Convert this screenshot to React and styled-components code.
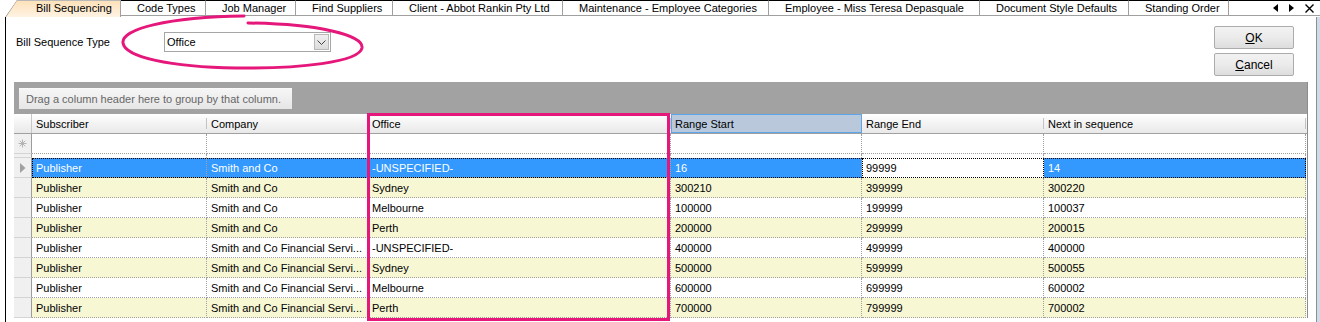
import React from 'react';
import styled, { createGlobalStyle, css } from 'styled-components';

// Global page reset
const GlobalStyle = createGlobalStyle`
  html, body {
    margin: 0;
    padding: 0;
    background: #fff;
  }
  body {
    font-family: "Liberation Sans", Arial, sans-serif;
    font-size: 11px;
    color: #000;
  }
`;

const PINK = '#e5177b';

const Screen = styled.div`
  position: relative;
  width: 1320px;
  height: 322px;
  overflow: hidden;
  background: #fff;
`;

/* ---------- tab strip ---------- */
const TabStrip = styled.div`
  display: flex;
  align-items: flex-start;
  height: 17px;
  padding-left: 5px;
`;

const Tab = styled.div`
  position: relative;
  box-sizing: border-box;
  flex: none;
  width: ${p => p.$w}px;
  height: ${p => (p.$active ? 17 : 16)}px;
  padding-left: ${p => (p.$active ? 31 : 16)}px;
  line-height: 15px;
  white-space: nowrap;
  border-top: 1px solid ${p => (p.$active ? '#b8b8b8' : '#000')};
  border-right: 1px solid #a0a0a0;
  border-bottom: ${p => (p.$active ? 'none' : '1px solid #a0a0a0')};
  background: ${p => (p.$active ? 'linear-gradient(#fde1bb, #fff3e3)' : '#fff')};

  ${p => p.$active && css`
    clip-path: polygon(12px 0, 100% 0, 100% 100%, 0 100%);
    &::before {
      content: '';
      position: absolute;
      left: 0;
      top: -1px;
      width: 12px;
      height: 18px;
      background: linear-gradient(to bottom right, transparent calc(50% - 0.8px), #9a9a9a 50%, transparent calc(50% + 0.8px));
    }
  `}
`;

const TabNav = styled.div`
  flex: 1;
  box-sizing: border-box;
  height: 16px;
  border-top: 1px solid #000;
  border-bottom: 1px solid #a0a0a0;
  display: flex;
  align-items: center;
  justify-content: flex-end;
  padding-right: 6px;
  gap: 11px;
`;

/* ---------- main panel ---------- */
const Panel = styled.div`
  box-sizing: border-box;
  margin-left: 5px;
  width: 1312px;
  height: 305px;
  border-left: 1px solid #000;
  border-right: 1px solid #8e8f8f;
  box-shadow: 3px 0 0 #cddbeb;
`;

const TopArea = styled.div`
  display: flex;
  height: 65px;
`;

const FormRow = styled.div`
  display: flex;
  align-items: center;
  height: 20px;
  margin: 15px 0 0 10px;
`;

const FieldLabel = styled.div`
  width: 148px;
`;

const Combo = styled.div`
  box-sizing: border-box;
  display: flex;
  width: 167px;
  height: 20px;
  border: 1px solid #a6a6a6;
  background: #fff;
`;

const ComboText = styled.div`
  flex: 1;
  padding-left: 2px;
  line-height: 19px;
`;

const DropButton = styled.div`
  box-sizing: border-box;
  width: 15px;
  margin: 1px;
  border: 1px solid #b9b9b9;
  background: linear-gradient(#f0f0f0, #dcdcdc);
  display: flex;
  align-items: center;
  justify-content: center;
`;

const ButtonColumn = styled.div`
  display: flex;
  flex-direction: column;
  gap: 4px;
  margin: 9px 22px 0 auto;
`;

const Button = styled.div`
  box-sizing: border-box;
  width: 80px;
  height: 23px;
  border: 1px solid #acacac;
  border-radius: 2px;
  background: linear-gradient(#f2f2f2, #ebebeb 50%, #dddddd);
  display: flex;
  align-items: center;
  justify-content: center;
  font-size: 12px;

  u {
    text-decoration: underline;
  }
`;

/* ---------- grid ---------- */
const Grid = styled.div`
  position: relative;
  width: 1293px;
  margin-left: 8px;
  border-right: 1px solid #8c8c8c;
  background: #fff;
`;

const GroupArea = styled.div`
  box-sizing: border-box;
  height: 32px;
  padding: 6px 0 0 5px;
  background: #a2a2a2;
`;

const GroupBox = styled.div`
  box-sizing: border-box;
  width: 273px;
  height: 21px;
  padding-left: 7px;
  line-height: 21px;
  color: #666;
  background: linear-gradient(#f6f6f6, #e6e6e6);
  border-top: 1px solid #fafafa;
`;

const HeaderRow = styled.div`
  display: flex;
  height: 20px;
  box-sizing: border-box;
  border-bottom: 1px solid #a0a0a0;
  background: linear-gradient(#ffffff, #f3f3f3 50%, #e9e9e9);
`;

const HeaderCell = styled.div`
  position: relative;
  box-sizing: border-box;
  flex: none;
  width: ${p => p.$w}px;
  padding-left: ${p => (p.$corner ? 0 : 4)}px;
  line-height: 21px;
  white-space: nowrap;
  overflow: hidden;
  border-right: ${p => (p.$corner ? '1px solid #c8c8c8' : 'none')};

  ${p => p.$hot && css`
    background: #b9c9db;
    border: 1px solid #5ba6ea;
    line-height: 19px;
    padding-left: 3px;
  `}

  ${p => !p.$hot && !p.$corner && css`
    &::after {
      content: '';
      position: absolute;
      right: 0;
      top: 4px;
      bottom: 4px;
      width: 1px;
      background: #c3c3c3;
    }
  `}
`;

const Row = styled.div`
  display: flex;
  height: ${p => p.$h || 20}px;
`;

const RowHeader = styled.div`
  box-sizing: border-box;
  flex: none;
  width: 18px;
  background: #f0f0f0;
  border-right: 1px solid #9c9c9c;
  border-bottom: 1px solid #d4d4d4;
  display: flex;
  align-items: center;
  justify-content: center;
`;

const CellGroup = styled.div`
  display: flex;
  flex: none;
  width: 1274px;

  ${p => p.$focus && css`
    outline: 1px dotted #000;
    outline-offset: -1px;
  `}
`;

const Cell = styled.div`
  box-sizing: border-box;
  flex: none;
  width: ${p => p.$w}px;
  padding-left: 4px;
  line-height: 20px;
  white-space: nowrap;
  overflow: hidden;
  border-right: 1px dotted #a0a0a0;
  border-bottom: ${p => (p.$plain ? 'none' : '1px dotted #a0a0a0')};
  background: ${p => (p.$selected ? '#3399ff' : p.$tone === 'yellow' ? '#f7f7d4' : '#fff')};
  color: ${p => (p.$selected ? '#fff' : '#000')};

  ${p => p.$current && css`
    background: #fff;
    color: #000;
    outline: 1px dotted #000;
    outline-offset: -1px;
  `}
`;

/* ---------- annotations ---------- */
const Highlight = styled.div`
  position: absolute;
  left: 353px;
  top: 31px;
  width: 303px;
  height: 208px;
  box-sizing: border-box;
  border: 3px solid ${PINK};
  pointer-events: none;
`;

const ScribbleLayer = styled.svg`
  position: absolute;
  left: 0;
  top: 0;
  pointer-events: none;
`;

/* ---------- data ---------- */
const tabs = [
  { label: 'Bill Sequencing', w: 116, active: true },
  { label: 'Code Types', w: 85 },
  { label: 'Job Manager', w: 90 },
  { label: 'Find Suppliers', w: 97 },
  { label: 'Client - Abbot Rankin Pty Ltd', w: 170 },
  { label: 'Maintenance - Employee Categories', w: 206 },
  { label: 'Employee - Miss Teresa Depasquale', w: 211 },
  { label: 'Document Style Defaults', w: 149 },
  { label: 'Standing Order', w: 100 },
];

const columns = [
  { key: 'subscriber', label: 'Subscriber', w: 175 },
  { key: 'company', label: 'Company', w: 161 },
  { key: 'office', label: 'Office', w: 303 },
  { key: 'start', label: 'Range Start', w: 191, hot: true },
  { key: 'end', label: 'Range End', w: 182 },
  { key: 'next', label: 'Next in sequence', w: 262 },
];

const FIN = 'Smith and Co Financial Servi...';

const rows = [
  ['Publisher', 'Smith and Co', '-UNSPECIFIED-', '16', '99999', '14'],
  ['Publisher', 'Smith and Co', 'Sydney', '300210', '399999', '300220'],
  ['Publisher', 'Smith and Co', 'Melbourne', '100000', '199999', '100037'],
  ['Publisher', 'Smith and Co', 'Perth', '200000', '299999', '200015'],
  ['Publisher', FIN, '-UNSPECIFIED-', '400000', '499999', '400000'],
  ['Publisher', FIN, 'Sydney', '500000', '599999', '500055'],
  ['Publisher', FIN, 'Melbourne', '600000', '699999', '600002'],
  ['Publisher', FIN, 'Perth', '700000', '799999', '700002'],
];

/* ---------- small drawings ---------- */
const ArrowLeft = () => (
  <svg width="5" height="8" viewBox="0 0 5 8"><polygon points="5,0 0,4 5,8" fill="#000" /></svg>
);
const ArrowRight = () => (
  <svg width="5" height="8" viewBox="0 0 5 8"><polygon points="0,0 5,4 0,8" fill="#000" /></svg>
);
const CloseX = () => (
  <svg width="9" height="9" viewBox="0 0 9 9">
    <path d="M0.5 0.5 L8.5 8.5 M8.5 0.5 L0.5 8.5" stroke="#000" strokeWidth="1.4" />
  </svg>
);
const Chevron = () => (
  <svg width="9" height="5" viewBox="0 0 9 5">
    <polyline points="0.5,0.5 4.5,4.5 8.5,0.5" fill="none" stroke="#444" strokeWidth="1" />
  </svg>
);
const NewRowStar = () => (
  <svg width="9" height="9" viewBox="0 0 9 9">
    <path d="M4.5 0.5 V8.5 M0.5 4.5 H8.5 M1.7 1.7 L7.3 7.3 M7.3 1.7 L1.7 7.3" stroke="#b4b4b4" strokeWidth="1" />
  </svg>
);
const RowPointer = () => (
  <svg width="6" height="10" viewBox="0 0 6 10"><polygon points="0,0 5.5,5 0,10" fill="#a0a0a0" /></svg>
);

const App = () => {
  return (
    <Screen>
      <GlobalStyle />
      <TabStrip>
        {tabs.map(t => (
          <Tab key={t.label} $w={t.w} $active={t.active}>{t.label}</Tab>
        ))}
        <TabNav>
          <ArrowLeft />
          <ArrowRight />
          <CloseX />
        </TabNav>
      </TabStrip>

      <Panel>
        <TopArea>
          <FormRow>
            <FieldLabel>Bill Sequence Type</FieldLabel>
            <Combo>
              <ComboText>Office</ComboText>
              <DropButton><Chevron /></DropButton>
            </Combo>
          </FormRow>
          <ButtonColumn>
            <Button><u>O</u>K</Button>
            <Button><u>C</u>ancel</Button>
          </ButtonColumn>
        </TopArea>

        <Grid>
          <GroupArea>
            <GroupBox>Drag a column header here to group by that column.</GroupBox>
          </GroupArea>

          <HeaderRow>
            <HeaderCell $w={18} $corner />
            {columns.map(c => (
              <HeaderCell key={c.key} $w={c.w} $hot={c.hot}>{c.label}</HeaderCell>
            ))}
          </HeaderRow>

          {/* new row placeholder */}
          <Row>
            <RowHeader><NewRowStar /></RowHeader>
            <CellGroup>
              {columns.map(c => <Cell key={c.key} $w={c.w} />)}
            </CellGroup>
          </Row>
          <Row $h={4}>
            <RowHeader />
            <CellGroup>
              {columns.map(c => <Cell key={c.key} $w={c.w} $plain />)}
            </CellGroup>
          </Row>

          {rows.map((r, i) => {
            const selected = i === 0;
            const tone = i % 2 === 1 ? 'yellow' : 'white';
            return (
              <Row key={i}>
                <RowHeader>{selected && <RowPointer />}</RowHeader>
                <CellGroup $focus={selected}>
                  {columns.map((c, j) => (
                    <Cell
                      key={c.key}
                      $w={c.w}
                      $tone={tone}
                      $selected={selected}
                      $current={selected && c.key === 'end'}
                    >
                      {r[j]}
                    </Cell>
                  ))}
                </CellGroup>
              </Row>
            );
          })}

          <Highlight />
        </Grid>
      </Panel>

      <ScribbleLayer width="400" height="80" viewBox="0 0 400 80">
        <path
          d="M248 23 C318 24, 364 35, 362 48 C359 62, 300 69, 236 68 C170 67, 125 57, 123 43 C121 29, 168 17, 244 16"
          fill="none"
          stroke={PINK}
          strokeWidth="3"
          strokeLinecap="round"
        />
      </ScribbleLayer>
    </Screen>
  );
};

export default App;
